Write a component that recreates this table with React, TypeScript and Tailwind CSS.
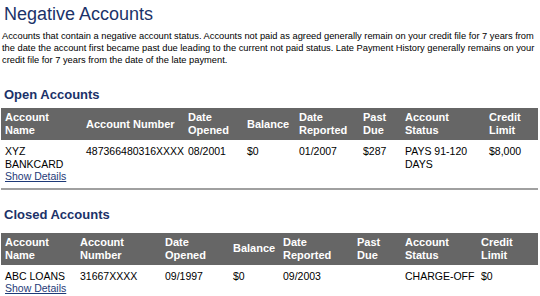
type Col = { label: string[]; w: number };

const openCols: Col[] = [
  { label: ["Account", "Name"], w: 81 },
  { label: ["Account Number"], w: 102 },
  { label: ["Date", "Opened"], w: 59 },
  { label: ["Balance"], w: 52 },
  { label: ["Date", "Reported"], w: 64 },
  { label: ["Past", "Due"], w: 42 },
  { label: ["Account", "Status"], w: 84 },
  { label: ["Credit", "Limit"], w: 53 },
];

const closedCols: Col[] = [
  { label: ["Account", "Name"], w: 75 },
  { label: ["Account", "Number"], w: 85 },
  { label: ["Date", "Opened"], w: 68 },
  { label: ["Balance"], w: 50 },
  { label: ["Date", "Reported"], w: 74 },
  { label: ["Past", "Due"], w: 48 },
  { label: ["Account", "Status"], w: 76 },
  { label: ["Credit", "Limit"], w: 61 },
];

function AccountTable({ cols, row }: { cols: Col[]; row: string[][] }) {
  return (
    <table className="w-[537px] table-fixed border-collapse">
      <colgroup>
        {cols.map((c, i) => (
          <col key={i} style={{ width: c.w }} />
        ))}
      </colgroup>
      <thead>
        <tr className="bg-[#666666]">
          {cols.map((c, i) => (
            <th
              key={i}
              className="h-[32px] px-[4px] py-0 text-left align-middle font-['Liberation_Sans',Arial,sans-serif] text-[11px] font-bold leading-[13px] text-white"
            >
              {c.label.map((l, j) => (
                <div key={j} className="whitespace-nowrap">
                  {l}
                </div>
              ))}
            </th>
          ))}
        </tr>
      </thead>
      <tbody>
        <tr className="border-b-2 border-[#a0a0a0]">
          {row.map((lines, i) => (
            <td
              key={i}
              className="px-[4px] pt-[5px] pb-[5px] align-top text-[10.5px] leading-[12.5px] text-black"
            >
              {lines.map((l, j) => (
                <div key={j} className="whitespace-nowrap">
                  {l}
                </div>
              ))}
              {i === 0 && (
                <a href="#" className="block whitespace-nowrap text-[#1e3a78] underline">
                  Show Details
                </a>
              )}
            </td>
          ))}
        </tr>
      </tbody>
    </table>
  );
}

export default function App() {
  return (
    <div className="h-[296px] w-[540px] overflow-hidden bg-white pl-[1px] font-['Liberation_Sans',Arial,sans-serif]">
      <h1 className="pl-[3px] pt-[2px] text-[18px] leading-[24px] text-[#1b3269]">Negative Accounts</h1>
      <p className="mt-[4px] pl-[1px] text-[9.3px] leading-[12px] text-black">
        Accounts that contain a negative account status. Accounts not paid as agreed generally remain on your credit
        file for 7 years from the date the account first became past due leading to the current not paid status. Late
        Payment History generally remains on your credit file for 7 years from the date of the late payment.
      </p>
      <h2 className="mt-[21px] pl-[3px] text-[13px] font-bold leading-[16px] text-[#1b3269]">Open Accounts</h2>
      <div className="mt-[5px]">
        <AccountTable
          cols={openCols}
          row={[
            ["XYZ", "BANKCARD"],
            ["487366480316XXXX"],
            ["08/2001"],
            ["$0"],
            ["01/2007"],
            ["$287"],
            ["PAYS 91-120", "DAYS"],
            ["$8,000"],
          ]}
        />
      </div>
      <h2 className="mt-[17px] pl-[3px] text-[13px] font-bold leading-[16px] text-[#1b3269]">Closed Accounts</h2>
      <div className="mt-[10px]">
        <AccountTable
          cols={closedCols}
          row={[
            ["ABC LOANS"],
            ["31667XXXX"],
            ["09/1997"],
            ["$0"],
            ["09/2003"],
            [""],
            ["CHARGE-OFF"],
            ["$0"],
          ]}
        />
      </div>
    </div>
  );
}
